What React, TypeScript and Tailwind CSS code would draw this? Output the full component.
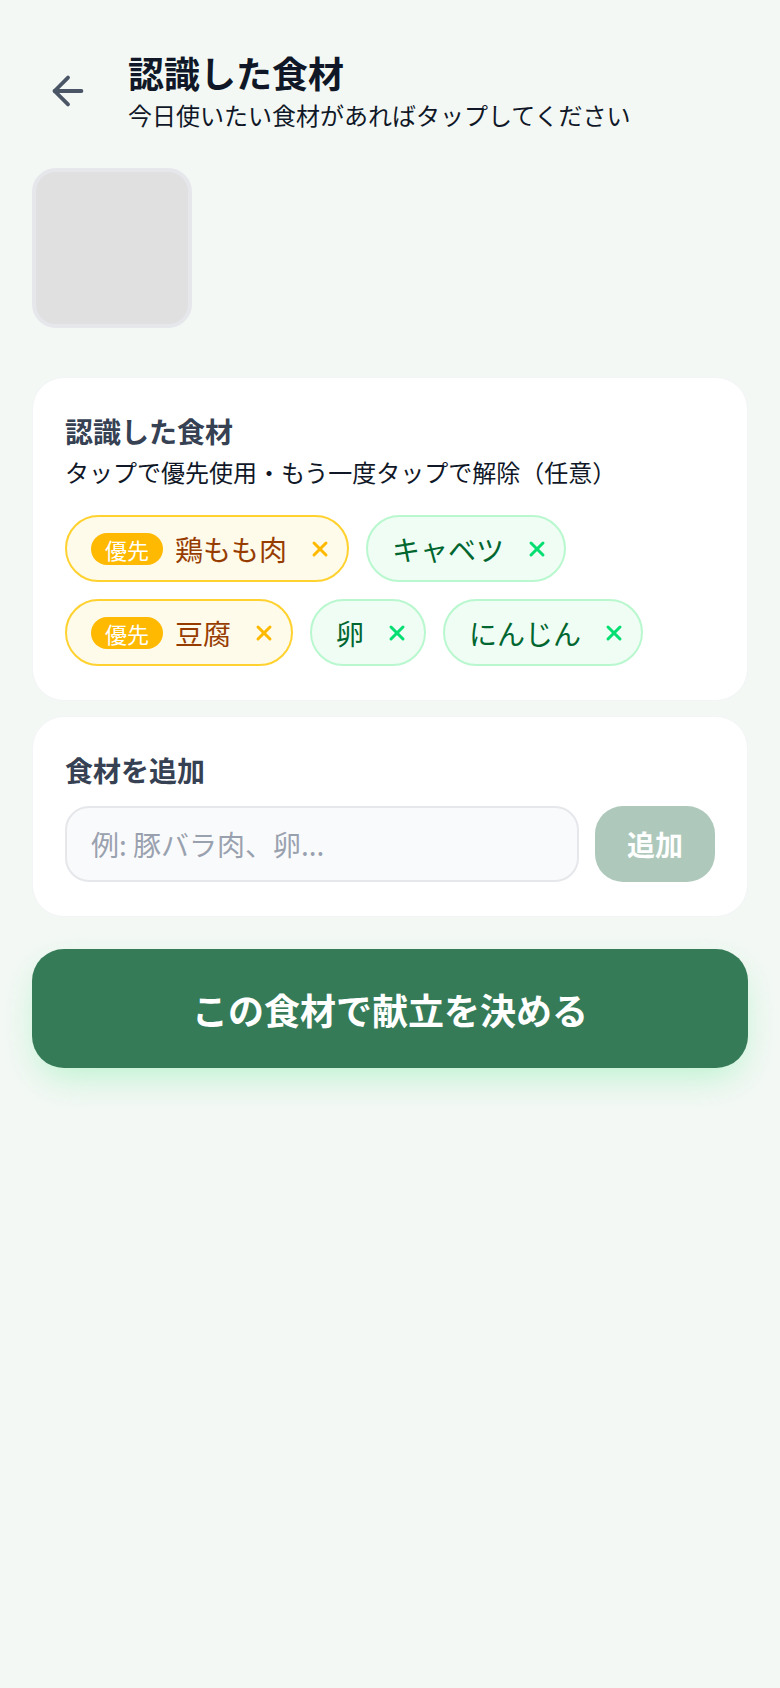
import { ArrowLeft, X } from 'lucide-react'

type Ingredient = {
  name: string
  priority: boolean
}

const INGREDIENTS: Ingredient[][] = [
  [
    { name: '鶏もも肉', priority: true },
    { name: 'キャベツ', priority: false },
  ],
  [
    { name: '豆腐', priority: true },
    { name: '卵', priority: false },
    { name: 'にんじん', priority: false },
  ],
]

const FONT = '"Noto Sans CJK JP", "Noto Sans", sans-serif'

function Chip({ item }: { item: Ingredient }) {
  if (item.priority) {
    return (
      <div className="flex h-[67px] items-center rounded-full border-2 border-amber-300 bg-[#fffbeb] pl-6 pr-[15px]">
        <span className="rounded-full bg-amber-400 px-[14px] text-[22px] leading-[32px] text-white">
          優先
        </span>
        <span className="ml-3 text-[28px] leading-[42px] text-amber-800">{item.name}</span>
        <X size={24} strokeWidth={3} className="ml-[21px] text-amber-400" />
      </div>
    )
  }
  return (
    <div className="flex h-[67px] items-center rounded-full border-2 border-green-200 bg-green-50 pl-6 pr-[15px]">
      <span className="text-[28px] leading-[42px] text-green-800">{item.name}</span>
      <X size={24} strokeWidth={3} className="ml-[21px] text-green-400" />
    </div>
  )
}

export default function App() {
  return (
    <div className="min-h-[1688px] w-full bg-[#f4f8f5] px-8" style={{ fontFamily: FONT }}>
      {/* header */}
      <div className="flex items-center pt-[50px]">
        <button className="ml-3 flex h-12 w-12 items-center justify-center text-gray-600">
          <ArrowLeft size={46} strokeWidth={2} />
        </button>
        <div className="ml-[36px]">
          <h1 className="text-[36px] leading-[44px] font-bold text-gray-900">認識した食材</h1>
          <p className="mt-[5px] text-[24px] leading-[32px] text-gray-900">
            今日使いたい食材があればタップしてください
          </p>
        </div>
      </div>

      {/* photo */}
      <div className="mt-[37px] h-40 w-40 rounded-3xl border-4 border-gray-200 bg-[#e0e0e0]" />

      {/* recognised list */}
      <div className="mt-[49px] rounded-[32px] border border-gray-100 bg-white px-8 pt-8 pb-[34px]">
        <h2 className="text-[28px] leading-[42px] font-bold text-gray-700">認識した食材</h2>
        <p className="mt-[3px] text-[24px] leading-[34px] text-gray-900">
          タップで優先使用・もう一度タップで解除（任意）
        </p>
        <div className="mt-[26px] flex flex-col gap-[17px]">
          {INGREDIENTS.map((row, i) => (
            <div key={i} className="flex gap-[17px]">
              {row.map((item) => (
                <Chip key={item.name} item={item} />
              ))}
            </div>
          ))}
        </div>
      </div>

      {/* add */}
      <div className="mt-[15px] rounded-[32px] border border-gray-100 bg-white px-8 pt-8 pb-[34px]">
        <h2 className="text-[28px] leading-[42px] font-bold text-gray-700">食材を追加</h2>
        <div className="mt-[15px] flex gap-4">
          <input
            placeholder="例: 豚バラ肉、卵..."
            className="h-[76px] flex-1 rounded-3xl border-2 border-gray-200 bg-gray-50 px-6 text-[28px] text-gray-900 outline-none placeholder:text-gray-400"
          />
          <button className="h-[76px] w-[120px] rounded-[28px] bg-[#367b58] text-[28px] font-bold text-white opacity-40">
            追加
          </button>
        </div>
      </div>

      {/* submit */}
      <button className="mt-[32px] h-[119px] w-full rounded-[32px] bg-[#367b58] text-[36px] font-bold text-white shadow-[0_14px_36px_-6px_rgba(134,239,172,0.55)]">
        この食材で献立を決める
      </button>
    </div>
  )
}
